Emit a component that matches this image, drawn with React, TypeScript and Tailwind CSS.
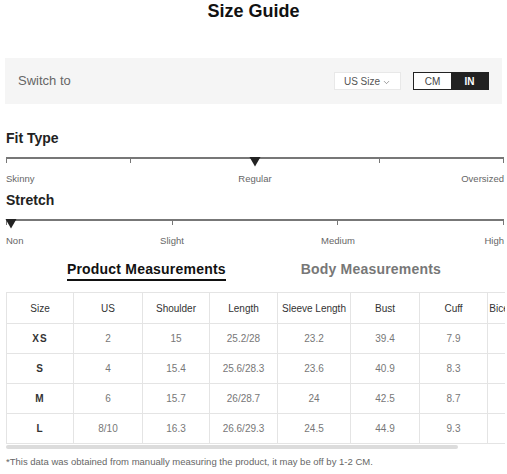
import { ChevronDown } from 'lucide-react'

const rows = [
    ['XS', '2', '15', '25.2/28', '23.2', '39.4', '7.9'],
    ['S', '4', '15.4', '25.6/28.3', '23.6', '40.9', '8.3'],
    ['M', '6', '15.7', '26/28.7', '24', '42.5', '8.7'],
    ['L', '8/10', '16.3', '26.6/29.3', '24.5', '44.9', '9.3'],
]

const headers = ['Size', 'US', 'Shoulder', 'Length', 'Sleeve Length', 'Bust', 'Cuff', 'Bicep Length']
const widths = ['w-[67px]', 'w-[69px]', 'w-[67px]', 'w-[68px]', 'w-[73px]', 'w-[69px]', 'w-[68px]', 'w-[62px]']

function Marker() {
    return (
        <svg width="12" height="10" viewBox="0 0 12 10" className="block">
            <path d="M0.5 0 L11.5 0 L6 9.5 Z" fill="#222" />
        </svg>
    )
}

function Scale({ ticks, labels, marker }: { ticks: number; labels: { text: string; pos: number }[]; marker: number }) {
    return (
        <div className="relative h-[28px]">
            <div className="absolute left-0 right-0 top-0 h-[1.5px] bg-[#777]" />
            <div className="absolute left-0 right-0 top-0 flex justify-between">
                {Array.from({ length: ticks }).map((_, i) => (
                    <div key={i} className="w-[1px] h-[6px] bg-[#777]" />
                ))}
            </div>
            <div
                className="absolute top-0 -translate-x-1/2"
                style={{ left: marker === 0 ? '5px' : `${marker * 100}%` }}
            >
                <Marker />
            </div>
            {labels.map((l) => (
                <span
                    key={l.text}
                    className={
                        l.pos === 0
                            ? 'absolute top-[16px] left-0 text-[9.5px] leading-[12px] text-[#666]'
                            : l.pos === 1
                              ? 'absolute top-[16px] right-0 text-[9.5px] leading-[12px] text-[#666]'
                              : 'absolute top-[16px] -translate-x-1/2 text-[9.5px] leading-[12px] text-[#666]'
                    }
                    style={l.pos > 0 && l.pos < 1 ? { left: `${l.pos * 100}%` } : undefined}
                >
                    {l.text}
                </span>
            ))}
        </div>
    )
}

export default function App() {
    return (
        <div className="w-[507px] h-[474px] bg-white overflow-hidden font-['Liberation_Sans',Arial,sans-serif]">
            <h1 className="text-center text-[18px] leading-[22px] font-bold text-[#111]">Size Guide</h1>

            {/* Switch bar */}
            <div className="mt-[36px] mx-[5px] h-[46px] bg-[#f5f5f5] flex items-center pl-[13px] pr-[13px]">
                <span className="text-[13px] text-[#666]">Switch to</span>
                <div className="ml-auto flex items-center gap-[12px]">
                    <div className="w-[67px] h-[18px] bg-white border border-[#e8e8e8] flex items-center justify-center gap-[2px] text-[10px] text-[#555]">
                        US Size
                        <ChevronDown className="w-[9px] h-[9px] mt-[2px]" strokeWidth={1.5} />
                    </div>
                    <div className="w-[76px] h-[18px] border border-[#222] flex text-[10px]">
                        <div className="flex-1 flex items-center justify-center bg-white text-[#444]">CM</div>
                        <div className="flex-1 flex items-center justify-center bg-[#222] text-white font-bold">IN</div>
                    </div>
                </div>
            </div>

            <div className="ml-[6px] mr-[3px]">
                <h2 className="mt-[26px] text-[14px] leading-[16px] font-bold text-[#222]">Fit Type</h2>
                <div className="mt-[11px]">
                    <Scale
                        ticks={5}
                        marker={0.5}
                        labels={[
                            { text: 'Skinny', pos: 0 },
                            { text: 'Regular', pos: 0.5 },
                            { text: 'Oversized', pos: 1 },
                        ]}
                    />
                </div>

                <h2 className="mt-[7px] text-[14px] leading-[16px] font-bold text-[#222]">Stretch</h2>
                <div className="mt-[11px]">
                    <Scale
                        ticks={4}
                        marker={0}
                        labels={[
                            { text: 'Non', pos: 0 },
                            { text: 'Slight', pos: 1 / 3 },
                            { text: 'Medium', pos: 2 / 3 },
                            { text: 'High', pos: 1 },
                        ]}
                    />
                </div>
            </div>

            {/* Tabs */}
            <div className="mt-[13px] flex justify-center gap-[75px] pl-[1px]">
                <div className="text-[14px] leading-[18px] font-bold text-[#111] tracking-[0.2px] border-b-2 border-[#111] pb-[1px]">
                    Product Measurements
                </div>
                <div className="text-[14px] leading-[18px] font-bold text-[#777] tracking-[0.2px]">Body Measurements</div>
            </div>

            {/* Table */}
            <div className="mt-[11px] ml-[6px] mr-[2px] overflow-hidden">
                <table className="border-collapse table-fixed w-[543px] text-[10px] text-center">
                    <thead>
                        <tr className="h-[31px]">
                            {headers.map((h, i) => (
                                <th key={h} className={`${widths[i]} border border-[#e4e4e4] font-normal text-[#333] whitespace-nowrap`}>
                                    {h}
                                </th>
                            ))}
                        </tr>
                    </thead>
                    <tbody>
                        {rows.map((r) => (
                            <tr key={r[0]} className="h-[30px]">
                                {r.map((c, i) => (
                                    <td
                                        key={i}
                                        className={
                                            i === 0
                                                ? 'border border-[#e4e4e4] text-[#333] font-bold tracking-[1px]'
                                                : 'border border-[#e4e4e4] text-[#777]'
                                        }
                                    >
                                        {c}
                                    </td>
                                ))}
                                <td className="border border-[#e4e4e4]" />
                            </tr>
                        ))}
                    </tbody>
                </table>
                <div className="mt-[1px] h-[4px] w-[452px] rounded-full bg-[#dcdcdc]" />
            </div>

            <p className="mt-[7px] ml-[6px] text-[9.5px] leading-[12px] text-[#666]">
                *This data was obtained from manually measuring the product, it may be off by 1-2 CM.
            </p>
        </div>
    )
}
